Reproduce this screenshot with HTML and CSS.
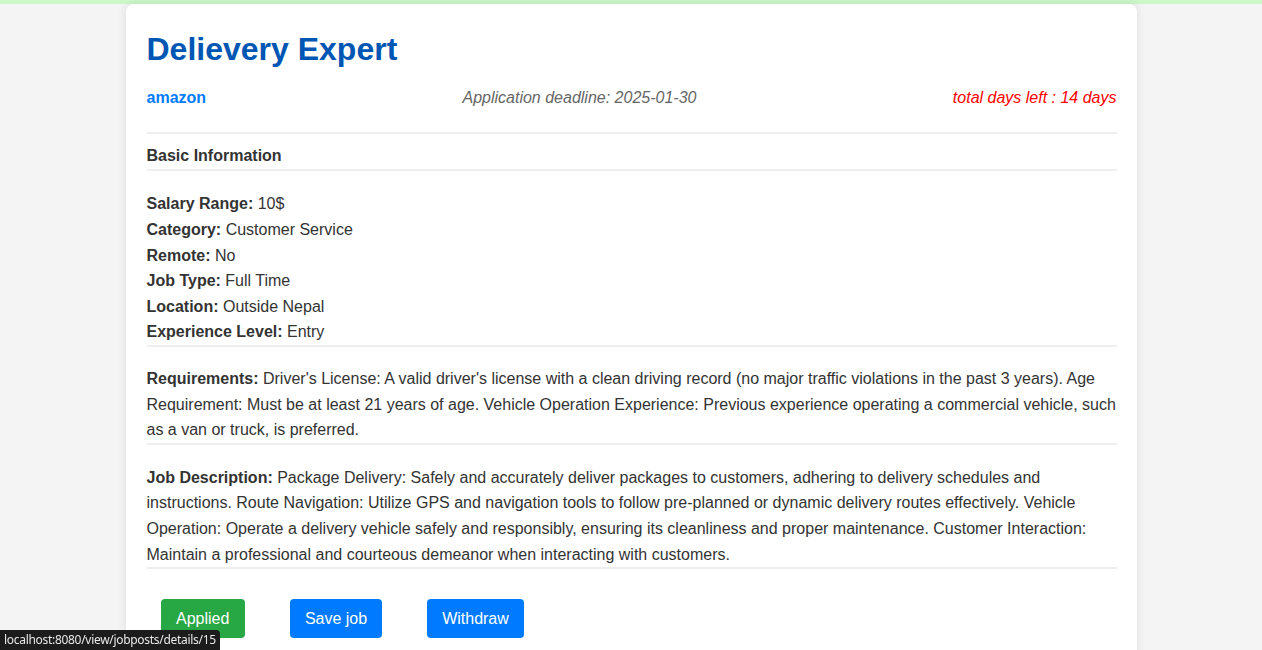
FILE: index.html
```html
<!DOCTYPE html>
<html lang="en">
<head>
<meta charset="utf-8">
<title>Delievery Expert</title>
<link rel="stylesheet" href="styles.css">
</head>
<body>
<div class="topbar"></div>
<main class="card">
  <h1 class="title">Delievery Expert</h1>
  <div class="meta">
    <a class="company" href="#">amazon</a>
    <span class="deadline">Application deadline: 2025-01-30</span>
    <span class="days-left">total days left : 14 days</span>
  </div>
  <h2 class="section-title">Basic Information</h2>
  <div class="info">
    <p><strong>Salary Range:</strong> 10$</p>
    <p><strong>Category:</strong> Customer Service</p>
    <p><strong>Remote:</strong> No</p>
    <p><strong>Job Type:</strong> Full Time</p>
    <p><strong>Location:</strong> Outside Nepal</p>
    <p><strong>Experience Level:</strong> Entry</p>
  </div>
  <div class="block">
    <p><strong>Requirements:</strong> Driver's License: A valid driver's license with a clean driving record (no major traffic violations in the past 3 years). Age Requirement: Must be at least 21 years of age. Vehicle Operation Experience: Previous experience operating a commercial vehicle, such as a van or truck, is preferred.</p>
  </div>
  <div class="block">
    <p><strong>Job Description:</strong> Package Delivery: Safely and accurately deliver packages to customers, adhering to delivery schedules and instructions. Route Navigation: Utilize GPS and navigation tools to follow pre-planned or dynamic delivery routes effectively. Vehicle Operation: Operate a delivery vehicle safely and responsibly, ensuring its cleanliness and proper maintenance. Customer Interaction: Maintain a professional and courteous demeanor when interacting with customers.</p>
  </div>
  <div class="actions">
    <button class="btn btn-green" type="button">Applied</button>
    <button class="btn btn-blue" type="button">Save job</button>
    <button class="btn btn-blue" type="button">Withdraw</button>
  </div>
</main>
<div class="statusbar">localhost:8080/view/jobposts/details/15</div>
</body>
</html>
```

FILE: styles.css
```css
html, body {
  margin: 0;
  padding: 0;
}
body {
  background: #f4f4f4;
  font-family: "Liberation Sans", Arial, sans-serif;
  font-size: 16px;
  line-height: 1.6;
  color: #333;
  height: 650px;
  overflow: hidden;
}
.topbar {
  height: 4px;
  background: #ccf7c8;
}
.card {
  width: 1011px;
  margin: 0 auto;
  box-sizing: border-box;
  background: #fff;
  border-radius: 8px;
  padding: 20px 20px 40px 21px;
  box-shadow: 0 0 10px rgba(0, 0, 0, 0.1);
}
.title {
  margin: 0 0 10px;
  font-size: 32px;
  font-weight: bold;
  color: #0056b3;
  line-height: 1.6;
}
.meta {
  display: flex;
  justify-content: space-between;
  align-items: center;
  padding-bottom: 21px;
  border-bottom: 2px solid #eee;
}
.company {
  color: #007bff;
  font-weight: bold;
  text-decoration: none;
}
.deadline {
  color: #666;
  font-style: italic;
}
.days-left {
  color: #ff0000;
  font-style: italic;
}
.section-title {
  margin: 9px 0 0;
  font-size: 16px;
  font-weight: bold;
  padding-bottom: 1px;
  border-bottom: 2px solid #eee;
  line-height: 1.6;
}
.info {
  padding-top: 20px;
  border-bottom: 2px solid #eee;
}
.info p,
.block p {
  margin: 0;
}
.block {
  padding-top: 19px;
  border-bottom: 2px solid #eee;
}
.block + .block {
  padding-top: 20px;
}
.actions {
  display: flex;
  gap: 45px;
  padding: 30px 0 0 14px;
}
.btn {
  font-family: "Liberation Sans", Arial, sans-serif;
  font-size: 16px;
  line-height: 19px;
  padding: 10px 15px;
  border: none;
  border-radius: 4px;
  color: #fff;
  cursor: pointer;
}
.btn-green {
  background: #28a745;
  padding: 10px 15.5px;
}
.btn-blue {
  background: #007bff;
}
.statusbar {
  position: fixed;
  left: 0;
  bottom: 0;
  height: 20px;
  padding: 0 4px 0 4px;
  background: #1c1c1c;
  color: #e8e8e8;
  font-family: "Noto Sans", "DejaVu Sans", sans-serif;
  font-size: 12px;
  line-height: 20px;
  border-top-right-radius: 4px;
  letter-spacing: -0.3px;
}
```
